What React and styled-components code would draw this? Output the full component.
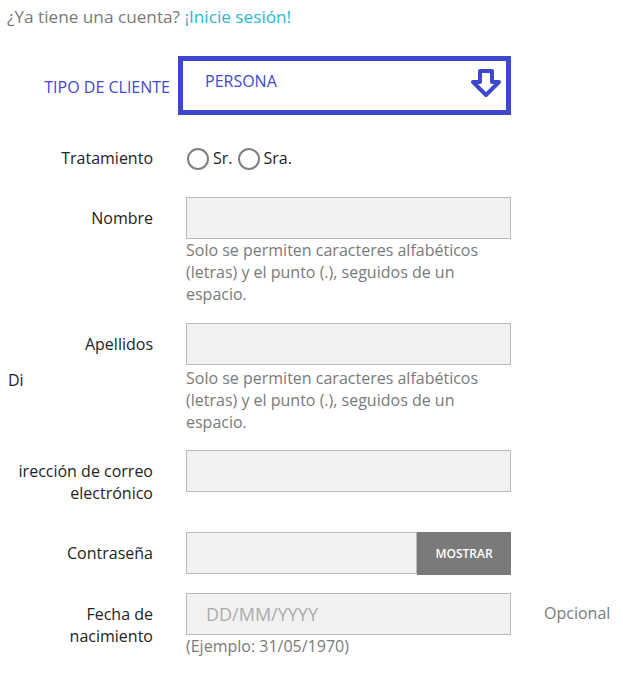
import React from "react";
import styled, { createGlobalStyle } from "styled-components";

const GlobalStyle = createGlobalStyle`
  body {
    margin: 0;
    background: #fff;
    color: #232323;
    font-family: "Open Sans", "Noto Sans", sans-serif;
    font-size: 16px;
  }
`;

const Page = styled.div`
  padding-top: 6px;
  width: 623px;
`;

const Intro = styled.p`
  margin: 0;
  padding-left: 7px;
  color: #7a7a7a;
  font-size: 17.2px;
  line-height: 22px;
`;

const LoginLink = styled.a`
  color: #2fb5d2;
  text-decoration: none;
`;

const SelectRow = styled.div`
  display: flex;
  align-items: flex-start;
  margin-top: 28px;
`;

const SelectLabel = styled.div`
  width: 170px;
  text-align: right;
  color: #3f48cc;
  line-height: 22px;
  padding-top: 20px;
`;

const SelectBox = styled.div`
  margin-left: 8px;
  width: 333px;
  height: 59px;
  box-sizing: border-box;
  border: 5px solid #3f48cc;
  display: flex;
  justify-content: space-between;
  align-items: flex-start;
  padding: 9px 4px 0 22px;
  color: #3f48cc;
  line-height: 22px;
`;

const ArrowIcon = styled.svg`
  margin-top: -2px;
  width: 32px;
  height: 32px;
`;

const FieldRow = styled.div`
  display: grid;
  grid-template-columns: 153px 325px auto;
  column-gap: 33px;
  margin-top: ${(p) => p.$mt}px;
`;

const Label = styled.div`
  text-align: right;
  padding-top: ${(p) => (p.$flat ? 0 : 10)}px;
  line-height: 22px;
`;

const Stray = styled.div`
  text-align: left;
  padding-left: 8px;
  margin-top: 14px;
  line-height: 22px;
`;

const Field = styled.div`
  display: flex;
  flex-direction: column;
`;

const InputGroup = styled.div`
  display: flex;
`;

const Input = styled.input`
  display: block;
  width: 100%;
  height: 42px;
  box-sizing: border-box;
  border: 1px solid #bbb;
  background: #f1f1f1;
  margin: 0;
  padding: 0 0 0 19px;
  font-family: inherit;
  font-size: 18px;
  color: #232323;
  outline: none;
  &::placeholder {
    color: #acacac;
  }
`;

const PasswordInput = styled(Input)`
  flex: 1;
  width: auto;
  min-width: 0;
`;

const ShowButton = styled.button`
  width: 94px;
  height: 43px;
  border: none;
  margin: 0;
  background: #7a7a7a;
  color: #fff;
  font-family: inherit;
  font-size: 12px;
  font-weight: 600;
  text-transform: uppercase;
  padding: 0;
`;

const Help = styled.div`
  color: #7a7a7a;
  line-height: 22px;
  margin-top: ${(p) => p.$mt || 0}px;
`;

const Extra = styled.div`
  color: #7a7a7a;
  padding-top: 9px;
  line-height: 22px;
`;

const Radios = styled.div`
  display: flex;
  align-items: center;
  line-height: 22px;
`;

const RadioCircle = styled.span`
  width: 22px;
  height: 22px;
  box-sizing: border-box;
  border: 2px solid #7f7f7f;
  border-radius: 50%;
  margin-right: 4px;
  margin-left: ${(p) => (p.$first ? 1 : 5)}px;
  position: relative;
  top: 1px;
`;

const nameHelp =
  "Solo se permiten caracteres alfabéticos (letras) y el punto (.), seguidos de un espacio.";

export default function App() {
  return (
    <Page>
      <GlobalStyle />
      <Intro>
        ¿Ya tiene una cuenta? <LoginLink href="#">¡Inicie sesión!</LoginLink>
      </Intro>

      <SelectRow>
        <SelectLabel>TIPO DE CLIENTE</SelectLabel>
        <SelectBox>
          <span>PERSONA</span>
          <ArrowIcon viewBox="0 0 32 32">
            <path
              d="M10 3 H22 V14 H29 L16 27 L3 14 H10 Z"
              fill="none"
              stroke="#3f48cc"
              strokeWidth="4"
              strokeLinejoin="round"
            />
          </ArrowIcon>
        </SelectBox>
      </SelectRow>

      <FieldRow $mt={32}>
        <Label $flat>Tratamiento</Label>
        <Radios>
          <RadioCircle $first />
          Sr.
          <RadioCircle />
          Sra.
        </Radios>
      </FieldRow>

      <FieldRow $mt={28}>
        <Label>Nombre</Label>
        <Field>
          <Input />
          <Help>{nameHelp}</Help>
        </Field>
      </FieldRow>

      <FieldRow $mt={18}>
        <Label>
          Apellidos
          <Stray>Di</Stray>
        </Label>
        <Field>
          <Input />
          <Help $mt={2}>{nameHelp}</Help>
        </Field>
      </FieldRow>

      <FieldRow $mt={17}>
        <Label>
          irección de correo
          <br />
          electrónico
        </Label>
        <Field>
          <Input />
        </Field>
      </FieldRow>

      <FieldRow $mt={28}>
        <Label>Contraseña</Label>
        <Field>
          <InputGroup>
            <PasswordInput type="password" />
            <ShowButton>Mostrar</ShowButton>
          </InputGroup>
        </Field>
      </FieldRow>

      <FieldRow $mt={18}>
        <Label>
          Fecha de
          <br />
          nacimiento
        </Label>
        <Field>
          <Input placeholder="DD/MM/YYYY" />
          <Help>(Ejemplo: 31/05/1970)</Help>
        </Field>
        <Extra>Opcional</Extra>
      </FieldRow>
    </Page>
  );
}
